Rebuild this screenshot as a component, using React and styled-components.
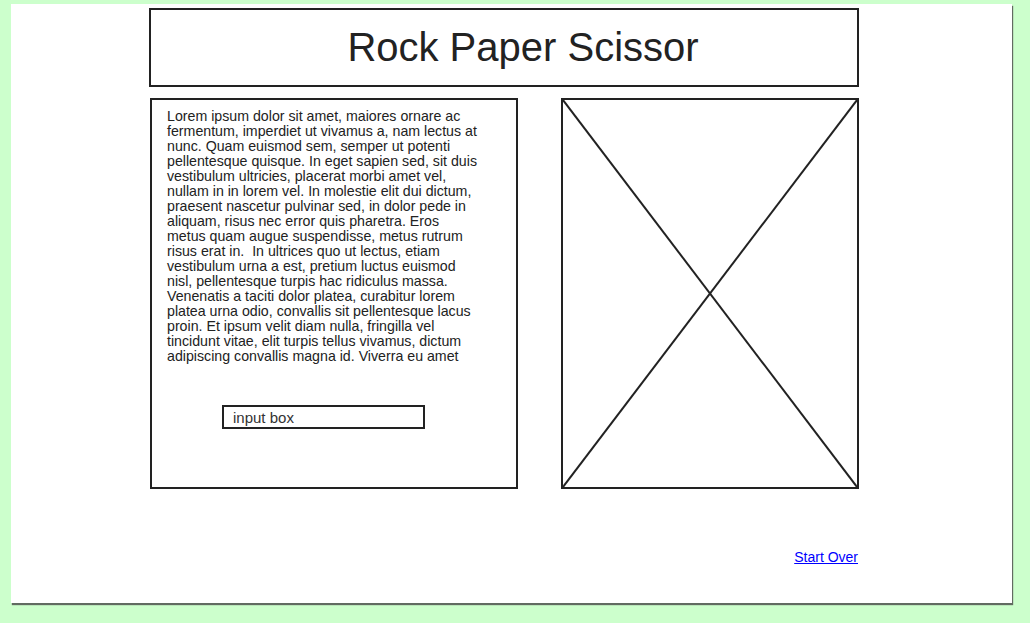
import React from "react";
import styled, { createGlobalStyle } from "styled-components";

const GlobalStyles = createGlobalStyle`
  html, body {
    margin: 0;
    padding: 0;
    background: #ccffcc;
    font-family: "Liberation Sans", Arial, sans-serif;
  }
  body {
    min-height: 100vh;
  }
  #root {
    padding-top: 4px;
    padding-bottom: 20px;
  }
`;

const Page = styled.div`
  box-sizing: border-box;
  margin-left: 11px;
  width: 1001px;
  height: 599px;
  background: #ffffff;
  box-shadow: 1px 2px 1px rgba(70, 70, 70, 0.8);
  padding: 4px 0 0 138px;
`;

const Column = styled.div`
  width: 710px;
  display: flex;
  flex-direction: column;
`;

const Header = styled.div`
  box-sizing: border-box;
  height: 79px;
  border: 2px solid #222;
  display: flex;
  align-items: center;
  justify-content: center;
`;

const Title = styled.h1`
  margin: 0;
  font-weight: normal;
  font-size: 40px;
  color: #222;
  padding-left: 38px;
`;

const Row = styled.div`
  display: flex;
  justify-content: space-between;
  margin-top: 11px;
  padding-left: 1px;
`;

const TextPanel = styled.div`
  box-sizing: border-box;
  width: 368px;
  height: 391px;
  border: 2px solid #222;
  padding: 9px 0 0 15px;
  display: flex;
  flex-direction: column;
`;

const Copy = styled.p`
  margin: 0;
  font-size: 14.2px;
  line-height: 15px;
  color: #222;
  white-space: nowrap;
`;

const InputBox = styled.div`
  box-sizing: border-box;
  width: 203px;
  height: 24px;
  border: 2px solid #222;
  margin: 41px 0 0 55px;
  padding: 0 0 0 9px;
  font-size: 15px;
  line-height: 22px;
  color: #333;
`;

const ImagePanel = styled.div`
  box-sizing: border-box;
  width: 298px;
  height: 391px;
  border: 2px solid #222;
  & > svg {
    display: block;
    width: 100%;
    height: 100%;
  }
`;

const Footer = styled.div`
  display: flex;
  justify-content: flex-end;
  margin-top: 60px;
`;

const Link = styled.a`
  font-size: 14px;
  color: #0000ff;
  text-decoration: underline;
  margin-right: 1px;
`;

const lines = [
  "Lorem ipsum dolor sit amet, maiores ornare ac",
  "fermentum, imperdiet ut vivamus a, nam lectus at",
  "nunc. Quam euismod sem, semper ut potenti",
  "pellentesque quisque. In eget sapien sed, sit duis",
  "vestibulum ultricies, placerat morbi amet vel,",
  "nullam in in lorem vel. In molestie elit dui dictum,",
  "praesent nascetur pulvinar sed, in dolor pede in",
  "aliquam, risus nec error quis pharetra. Eros",
  "metus quam augue suspendisse, metus rutrum",
  "risus erat in.  In ultrices quo ut lectus, etiam",
  "vestibulum urna a est, pretium luctus euismod",
  "nisl, pellentesque turpis hac ridiculus massa.",
  "Venenatis a taciti dolor platea, curabitur lorem",
  "platea urna odio, convallis sit pellentesque lacus",
  "proin. Et ipsum velit diam nulla, fringilla vel",
  "tincidunt vitae, elit turpis tellus vivamus, dictum",
  "adipiscing convallis magna id. Viverra eu amet",
];

const App = () => {
  return (
    <>
      <GlobalStyles />
      <Page>
        <Column>
          <Header>
            <Title>Rock Paper Scissor</Title>
          </Header>
          <Row>
            <TextPanel>
              <Copy>
                {lines.map((line, i) => (
                  <React.Fragment key={i}>
                    {line.replace("  ", "\u00a0 ")}
                    {i < lines.length - 1 && <br />}
                  </React.Fragment>
                ))}
              </Copy>
              <InputBox>input box</InputBox>
            </TextPanel>
            <ImagePanel>
              <svg viewBox="0 0 294 387" preserveAspectRatio="none">
                <line x1="0" y1="0" x2="294" y2="387" stroke="#222" strokeWidth="2" />
                <line x1="294" y1="0" x2="0" y2="387" stroke="#222" strokeWidth="2" />
              </svg>
            </ImagePanel>
          </Row>
          <Footer>
            <Link href="#">Start Over</Link>
          </Footer>
        </Column>
      </Page>
    </>
  );
};

export default App;
